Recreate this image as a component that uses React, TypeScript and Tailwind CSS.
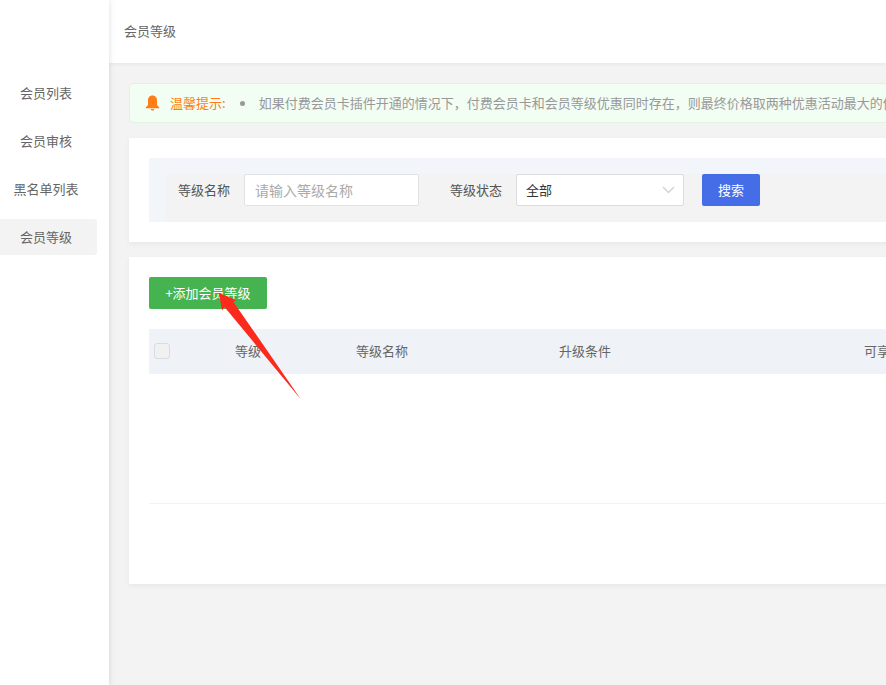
const menu = ['会员列表', '会员审核', '黑名单列表', '会员等级'];

const font = { fontFamily: '"Noto Sans CJK SC", "Noto Sans", sans-serif' };

function Bell() {
  return (
    <svg width="15" height="16" viewBox="0 0 15 16" fill="#ff7d14">
      <path d="M7.5 0.5C4.6 0.5 3 2.8 3 5.5V9C3 10.4 2.2 11.2 0.8 12V13.2H14.2V12C12.8 11.2 12 10.4 12 9V5.5C12 2.8 10.4 0.5 7.5 0.5Z" />
      <path d="M5.8 14H9.2C9.1 15 8.4 15.6 7.5 15.6C6.6 15.6 5.9 15 5.8 14Z" />
    </svg>
  );
}

function Arrow() {
  return (
    <svg className="absolute left-[215px] top-[290px] pointer-events-none" width="90" height="112" viewBox="0 0 90 112">
      <path d="M4 3 L21 10 L18.5 12 L86 109.5 L9.5 17 L7 20.5 Z" fill="#fb2a1c" />
    </svg>
  );
}

export default function App() {
  return (
    <div style={font} className="relative flex h-[685px] w-[886px] overflow-hidden bg-[#f3f3f3]">
      {/* Sidebar */}
      <aside className="z-10 w-[109px] shrink-0 bg-white pt-[75px] shadow-[1px_0_5px_rgba(0,0,0,0.1)]">
        {menu.map((item, i) => (
          <div
            key={item}
            className={`mb-[12px] flex h-[36px] w-[97px] items-center justify-center rounded-r-[3px] pr-[5px] text-[13px] text-[#666] ${
              i === 3 ? 'bg-[#f3f3f3]' : ''
            }`}
          >
            {item}
          </div>
        ))}
      </aside>

      <main className="min-w-0 flex-1">
        <header className="flex h-[63px] items-center bg-white pb-[2px] pl-[15px] text-[13px] text-[#666] shadow-[0_1px_4px_rgba(0,0,0,0.06)]">
          会员等级
        </header>

        <div className="w-[860px] pl-[20px] pt-[20px]">
          {/* Notice */}
          <div className="flex h-[40px] items-center whitespace-nowrap rounded-[4px] border border-[#dff3e0] bg-[#f2fdf3] pl-[15px] text-[13px]">
            <Bell />
            <span className="ml-[10px] text-[#ff7d14]">温馨提示:</span>
            <span className="ml-[14px] h-[5px] w-[5px] rounded-full bg-[#999]" />
            <span className="ml-[14px] text-[#999]">
              如果付费会员卡插件开通的情况下，付费会员卡和会员等级优惠同时存在，则最终价格取两种优惠活动最大的优惠
            </span>
          </div>

          {/* Filter */}
          <section className="mt-[15px] h-[104px] bg-white p-[20px] shadow-[0_2px_5px_rgba(0,0,0,0.05)]">
            <div className="h-[64px] bg-[#f2f5f9] pl-[16px] pt-[16px]">
              <div className="flex h-[48px] items-start bg-[#f3f3f3] text-[13px]">
                <label className="ml-[13px] mt-[6px] text-[#555]">等级名称</label>
                <div className="ml-[14px] flex h-[32px] w-[175px] items-center rounded-[2px] border border-[#dfe3e6] bg-white pl-[10px] text-[14px] text-[#aaa]">
                  请输入等级名称
                </div>
                <label className="ml-[31px] mt-[6px] text-[#555]">等级状态</label>
                <div className="ml-[14px] flex h-[32px] w-[168px] items-center justify-between rounded-[2px] border border-[#dcdcdc] bg-white pl-[9px] pr-[8px] text-[#333]">
                  全部
                  <svg width="13" height="8" viewBox="0 0 13 8" fill="none" stroke="#d4d4d4" strokeWidth="1.5">
                    <path d="M1 1L6.5 6.5L12 1" />
                  </svg>
                </div>
                <button className="ml-[18px] h-[32px] w-[58px] rounded-[2px] bg-[#466de8] text-white">搜索</button>
              </div>
            </div>
          </section>

          {/* List */}
          <section className="mt-[15px] h-[327px] bg-white px-[20px] pt-[20px] shadow-[0_2px_5px_rgba(0,0,0,0.05)]">
            <button className="h-[32px] w-[118px] rounded-[2px] bg-[#45b450] text-[13px] text-white">+添加会员等级</button>
            <div className="mt-[20px] flex h-[45px] items-center whitespace-nowrap bg-[#eff2f6] pb-[2px] pl-[5px] text-[13px] text-[#666]">
              <span className="h-[16px] w-[16px] rounded-[3px] border border-[#d8dbe2] bg-[#f1f1f1]" />
              <span className="ml-[65px] w-[121px]">等级</span>
              <span className="w-[203px]">等级名称</span>
              <span className="w-[305px]">升级条件</span>
              <span>可享权益</span>
            </div>
            <div className="h-[130px] border-b border-[#f2f2f2]" />
          </section>
        </div>
      </main>

      <Arrow />
    </div>
  );
}
